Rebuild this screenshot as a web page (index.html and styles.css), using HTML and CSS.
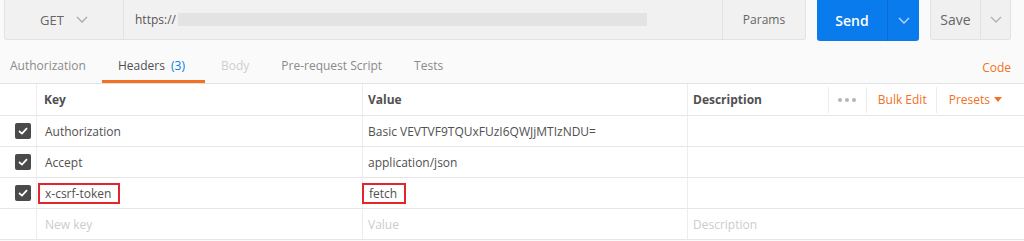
FILE: index.html
```html
<!DOCTYPE html>
<html>
<head>
<meta charset="utf-8">
<link rel="stylesheet" href="styles.css">
</head>
<body>
<div class="page">
  <div class="topbar">
    <div class="request">
      <div class="method"><span>GET</span>
        <svg class="chev" width="12" height="7" viewBox="0 0 12 7"><path d="M1 1 L6 6 L11 1" fill="none" stroke="#a8a8a8" stroke-width="1.3"/></svg>
      </div>
      <div class="url"><span>https://</span><span class="blur"></span></div>
      <div class="params">Params</div>
    </div>
    <div class="send">
      <span class="send-label">Send</span>
      <span class="send-caret"><svg width="12" height="7" viewBox="0 0 12 7"><path d="M1 1 L6 6 L11 1" fill="none" stroke="#b8d8fa" stroke-width="1.4"/></svg></span>
    </div>
    <div class="save">
      <span class="save-label">Save</span>
      <span class="save-caret"><svg width="12" height="7" viewBox="0 0 12 7"><path d="M1 1 L6 6 L11 1" fill="none" stroke="#b0b0b0" stroke-width="1.3"/></svg></span>
    </div>
  </div>

  <div class="tabs">
    <div class="tab first">Authorization</div>
    <div class="tab active">Headers <span class="count">(3)</span></div>
    <div class="tab disabled">Body</div>
    <div class="tab">Pre-request Script</div>
    <div class="tab">Tests</div>
    <div class="spacer"></div>
    <div class="code">Code</div>
  </div>

  <div class="table">
    <div class="row head">
      <div class="cell check"></div>
      <div class="cell key">Key</div>
      <div class="cell value">Value</div>
      <div class="cell desc">
        <span class="desc-title">Description</span>
        <div class="actions">
          <span class="act dots"><i></i><i></i><i></i></span>
          <span class="act bulk">Bulk Edit</span>
          <span class="act presets">Presets <svg width="8" height="5" viewBox="0 0 8 5"><path d="M0 0 L8 0 L4 5 Z" fill="#f47023"/></svg></span>
        </div>
      </div>
    </div>
    <div class="row">
      <div class="cell check"><span class="box"><svg width="10" height="8" viewBox="0 0 10 8"><path d="M1 4 L4 6.6 L9 1.2" fill="none" stroke="#fff" stroke-width="1.8"/></svg></span></div>
      <div class="cell key">Authorization</div>
      <div class="cell value">Basic VEVTVF9TQUxFUzI6QWJjMTIzNDU=</div>
      <div class="cell desc"></div>
    </div>
    <div class="row">
      <div class="cell check"><span class="box"><svg width="10" height="8" viewBox="0 0 10 8"><path d="M1 4 L4 6.6 L9 1.2" fill="none" stroke="#fff" stroke-width="1.8"/></svg></span></div>
      <div class="cell key">Accept</div>
      <div class="cell value">application/json</div>
      <div class="cell desc"></div>
    </div>
    <div class="row">
      <div class="cell check"><span class="box"><svg width="10" height="8" viewBox="0 0 10 8"><path d="M1 4 L4 6.6 L9 1.2" fill="none" stroke="#fff" stroke-width="1.8"/></svg></span></div>
      <div class="cell key"><span class="mark mark-key">x-csrf-token</span></div>
      <div class="cell value"><span class="mark mark-val">fetch</span></div>
      <div class="cell desc"></div>
    </div>
    <div class="row">
      <div class="cell check"></div>
      <div class="cell key ph">New key</div>
      <div class="cell value ph">Value</div>
      <div class="cell desc ph">Description</div>
    </div>
  </div>
</div>
</body>
</html>
```

FILE: styles.css
```css
* { box-sizing: border-box; }
html, body { margin: 0; padding: 0; }
body {
  font-family: "Open Sans", "Noto Sans", sans-serif;
  font-size: 12px;
  color: #505050;
  background: #fafafa;
  width: 1024px;
  height: 241px;
  overflow: hidden;
}

.topbar {
  display: flex;
  height: 41px;
  padding-left: 4px;
  gap: 11px;
  align-items: flex-start;
}
.request {
  display: flex;
  width: 802px;
  height: 40px;
  background: #f1f1f1;
  border: 1px solid #e2e2e2;
  border-top: none;
  border-radius: 0 0 3px 3px;
}
.method {
  width: 119px;
  display: flex;
  align-items: center;
  justify-content: center;
  gap: 12px;
  border-right: 1px solid #e2e2e2;
  font-size: 13px;
  color: #666;
}
.url {
  flex: 1;
  display: flex;
  align-items: center;
  padding-left: 11px;
  border-right: 1px solid #e2e2e2;
  color: #555;
}
.blur {
  display: block;
  width: 469px;
  height: 13px;
  margin-left: 2px;
  background: #e3e3e3;
}
.params {
  width: 82px;
  display: flex;
  align-items: center;
  justify-content: center;
  color: #666;
}

.send {
  width: 102px;
  height: 41px;
  display: flex;
  background: #097bed;
  border-radius: 0 0 3px 3px;
  color: #fff;
}
.send-label {
  width: 71px;
  display: flex;
  align-items: center;
  justify-content: center;
  font-weight: 600;
  font-size: 14px;
  border-right: 1px solid #0a6cd0;
}
.send-caret {
  flex: 1;
  display: flex;
  align-items: center;
  justify-content: center;
}
.save {
  width: 81px;
  height: 40px;
  display: flex;
  background: #f0f0f0;
  border: 1px solid #e2e2e2;
  border-top: none;
  border-radius: 0 0 3px 3px;
}
.save-label {
  width: 50px;
  display: flex;
  align-items: center;
  justify-content: center;
  font-size: 14px;
  color: #666;
  border-right: 1px solid #e2e2e2;
}
.save-caret {
  flex: 1;
  display: flex;
  align-items: center;
  justify-content: center;
}

.tabs {
  display: flex;
  height: 43px;
  border-bottom: 1px solid #e2e2e2;
}
.tab {
  height: 42px;
  padding: 10px 16px 0;
  border-bottom: 3px solid transparent;
  display: flex;
  align-items: center;
  color: #8a8a8a;
  white-space: pre;
}
.tab.first { padding-left: 10px; }
.tab.active { color: #505050; border-bottom-color: #f47023; padding-right: 20px; }
.tab.disabled { color: #cfcfcf; }
.count { color: #097bed; margin-left: 3px; }
.spacer { flex: 1; }
.code {
  padding: 10px 13px 0 0;
  display: flex;
  align-items: center;
  height: 42px;
  color: #f47023;
}

.table { background: #fff; }
.row {
  display: flex;
  height: 31px;
  border-bottom: 1px solid #e6e6e6;
}
.row.head { height: 32px; }
.cell {
  display: flex;
  align-items: center;
  border-left: 1px solid #ededed;
  white-space: nowrap;
}
.cell.check {
  width: 36px;
  border-left: none;
  padding-left: 15px;
}
.cell.key { width: 326px; padding-left: 8px; }
.cell.value { width: 325px; padding-left: 5px; }
.cell.desc { flex: 1; padding-left: 5px; }
.head .cell { font-weight: 700; color: #505050; }
.head .cell.key { padding-left: 7px; }
.ph { color: #cccccc; }

.box {
  width: 16px;
  height: 16px;
  border-radius: 2px;
  background: #4a4a4a;
  display: flex;
  align-items: center;
  justify-content: center;
}

.mark {
  border: 2px solid #e3262e;
  line-height: 17px;
}
.mark-key { padding: 0 7px 0 5px; margin-left: -7px; }
.mark-val { padding: 0 7px 0 5px; margin-left: -6px; margin-top: 1px; }

.desc-title { flex: 1; }
.actions {
  display: flex;
  height: 100%;
  align-items: center;
  font-weight: 400;
}
.act {
  height: 26px;
  display: flex;
  align-items: center;
  border-left: 1px solid #ececec;
  color: #f47023;
}
.dots {
  width: 38px;
  justify-content: center;
  gap: 3px;
}
.dots i {
  display: block;
  width: 4px;
  height: 4px;
  border-radius: 50%;
  background: #b5b5b5;
}
.bulk { padding: 0 9px 0 11px; }
.presets { padding: 0 22px 0 12px; gap: 4px; }
```
